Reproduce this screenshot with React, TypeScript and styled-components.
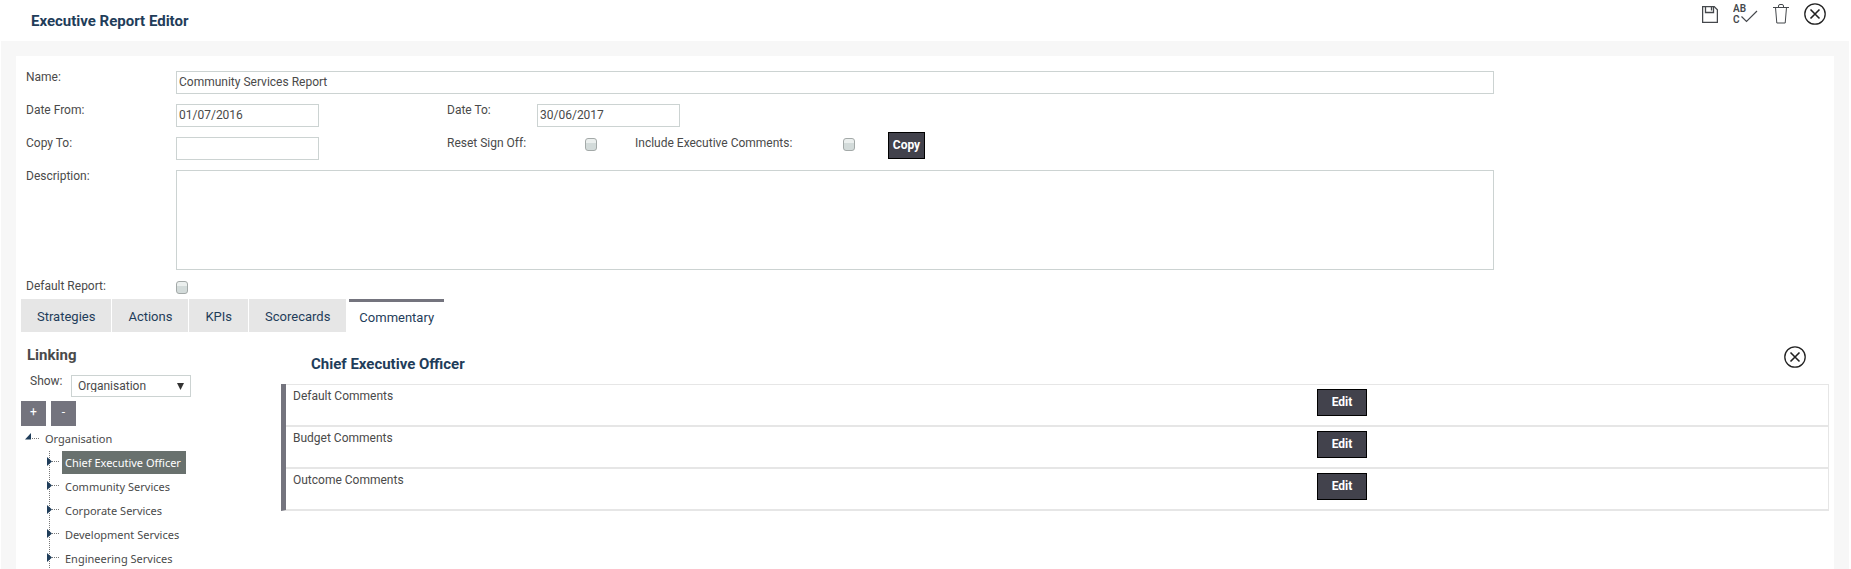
import React, { useState } from 'react';
import styled, { createGlobalStyle } from 'styled-components';

const color = {
  text: '#4a4a4a',
  heading: '#1f3d5a',
  canvas: '#f7f7f7',
  line: '#e6e6e6',
  field: '#ccd3d2',
  slate: '#74747e',
  dark: '#42424c',
  selected: '#69716e',
};

const GlobalStyle = createGlobalStyle`
  *, *::before, *::after { box-sizing: border-box; }
  body {
    margin: 0;
    background: #fff;
    color: ${color.text};
    font: 12px/12px Roboto, "Liberation Sans", sans-serif;
  }
  h1, h2, ul { margin: 0; padding: 0; }
  ul { list-style: none; }
  button, input, select, textarea { font: inherit; color: inherit; margin: 0; }
  button { cursor: pointer; }
`;

const Page = styled.div`
  height: 100vh;
  display: flex;
  flex-direction: column;
  overflow: hidden;
`;

const Header = styled.header`
  flex: none;
  height: 41px;
  display: flex;
  justify-content: space-between;
  align-items: flex-start;
  padding: 2px 25px 0 31px;
`;

const Title = styled.h1`
  color: ${color.heading};
  font-size: 15px;
  line-height: 38px;
  font-weight: 700;
`;

const Toolbar = styled.div`
  display: flex;
  align-items: center;
  gap: 15px;
`;

const IconButton = styled.button`
  display: flex;
  padding: 0;
  border: 0;
  background: none;
  color: #45484c;
`;

const Canvas = styled.main`
  flex: 1;
  min-height: 0;
  margin: 0 2px 0 1px;
  padding: 15px 15px 0;
  background: ${color.canvas};
`;

const Panel = styled.div`
  min-height: 100%;
  background: #fff;
`;

const Form = styled.form`
  display: flex;
  flex-direction: column;
  gap: 10px;
  padding: 15px 340px 5px 10px;
`;

const Row = styled.div`
  display: flex;
  align-items: flex-start;
`;

const Label = styled.label<{ $width: number }>`
  flex: none;
  width: ${(p) => p.$width}px;
`;

const TextInput = styled.input<{ $short?: boolean }>`
  ${(p) => (p.$short ? 'width: 143px;' : 'flex: 1; min-width: 0;')}
  height: 23px;
  padding: 0 2px 2px;
  border: 1px solid ${color.field};
  background: #fff;
`;

const TextArea = styled.textarea`
  flex: 1;
  min-width: 0;
  height: 100px;
  padding: 2px;
  border: 1px solid ${color.field};
  resize: none;
`;

const Slot = styled.div<{ $width: number }>`
  flex: none;
  display: flex;
  width: ${(p) => p.$width}px;
`;

const Check = styled.input.attrs({ type: 'checkbox' })`
  appearance: none;
  width: 12px;
  height: 13px;
  margin-top: 1px;
  border: 1px solid #a3a9a8;
  border-radius: 3px;
  background: linear-gradient(#ebefee 35%, #d3dbda 40%);
  &:checked { background: ${color.slate}; }
`;

const DarkButton = styled.button<{ $wide?: boolean }>`
  height: 27px;
  width: ${(p) => (p.$wide ? 50 : 37)}px;
  padding: 0 0 2px;
  border: 1px solid #000;
  background: ${color.dark};
  color: #fff;
  font-weight: 700;
`;

const CopyButton = styled(DarkButton)`
  margin: -5px 0;
`;

const Tabs = styled.div`
  display: flex;
  gap: 1px;
  padding: 0 5px;
`;

const Tab = styled.button<{ $active: boolean }>`
  height: 33px;
  border: 0;
  border-top: 3px solid ${(p) => (p.$active ? color.slate : color.line)};
  margin-left: ${(p) => (p.$active ? 2 : 0)}px;
  padding: ${(p) => (p.$active ? '2px 10px 0' : '0 16px')};
  background: ${(p) => (p.$active ? '#fff' : color.line)};
  color: ${color.heading};
  font-size: 13px;
`;

const Split = styled.div`
  display: grid;
  grid-template-columns: 260px 1fr;
  padding: 0 5px;
`;

const SideTitle = styled.h2`
  padding: 15px 6px 11px;
  font-size: 15px;
  line-height: 17px;
  font-weight: 700;
`;

const ShowRow = styled.div`
  display: flex;
  padding-left: 9px;
`;

const SelectBox = styled.div`
  display: flex;
  align-items: center;
  width: 120px;
  height: 22px;
  border: 1px solid ${color.field};
`;

const Select = styled.select`
  flex: 1;
  height: 20px;
  padding: 0 6px;
  border: 0;
  background: none;
  appearance: none;
`;

const Arrow = styled.svg`
  margin: 0 6px 0 -12px;
  pointer-events: none;
`;

const ToggleRow = styled.div`
  display: flex;
  gap: 5px;
  padding: 4px 0 1px;
`;

const Toggle = styled.button`
  width: 25px;
  height: 25px;
  padding: 0 0 3px;
  border: 0;
  background: ${color.slate};
  color: #fff;
`;

const Tree = styled.ul`
  font-family: "Noto Sans", "Open Sans", sans-serif;
  font-size: 11px;
`;

const Branch = styled.ul`
  padding-left: 24px;
`;

const TreeItem = styled.li`
  background: linear-gradient(#777 50%, transparent 50%) 4px 0 / 1px 2px repeat-y;
`;

const TreeLine = styled.div`
  display: flex;
  height: 24px;
`;

const Twig = styled.svg`
  flex: none;
  margin-top: 3px;
`;

const TreeLabel = styled.button<{ $selected: boolean }>`
  height: 23px;
  padding: 0 5px 0 3px;
  border: 0;
  white-space: nowrap;
  background: ${(p) => (p.$selected ? color.selected : 'none')};
  color: ${(p) => (p.$selected ? '#fff' : color.text)};
`;

const DetailHead = styled.div`
  display: flex;
  justify-content: space-between;
  align-items: flex-start;
  height: 52px;
  padding: 14px 23px 0 30px;
`;

const DetailTitle = styled.h2`
  color: ${color.heading};
  font-size: 15px;
  line-height: 36px;
  font-weight: 700;
`;

const Comments = styled.ul`
  border-left: 5px solid ${color.slate};
  border-bottom: 1px solid ${color.line};
`;

const Comment = styled.li`
  display: grid;
  grid-template-columns: 2fr 1fr;
  align-items: flex-start;
  height: 42px;
  padding: 4px 0;
  border: 1px solid ${color.line};
  border-left: 0;
`;

const CommentName = styled.span`
  padding: 1px 7px;
`;

const EditCell = styled.div`
  padding-left: 3px;
`;

const SaveIcon = () => (
  <svg width="16" height="17" viewBox="0 0 16 17" fill="none" stroke="currentColor" strokeWidth="1.300">
    <path d="M.6.6h11.600l3.200 3.200v12.600H.6z" />
    <path d="M3.500.5v6h8v-6M9.500 1v3.500" />
  </svg>
);

const SpellIcon = () => (
  <svg width="25" height="24" viewBox="0 0 25 24">
    <g fill="currentColor" fontFamily="Roboto, sans-serif" fontSize="10" fontWeight="600">
      <text x="0" y="10">AB</text>
      <text x="0" y="21">C</text>
    </g>
    <path d="M8.500 14.500l5 5L24 9" fill="none" stroke="currentColor" strokeWidth="1.200" />
  </svg>
);

const TrashIcon = () => (
  <svg width="16" height="20" viewBox="0 0 16 20" fill="none" stroke="currentColor">
    <path d="M0 3.500h16M5.500 3.500V2q0-1.500 1.500-1.500h2q1.500 0 1.500 1.500v1.500" />
    <path d="M2.500 3.500l1.300 15.500h8.400l1.300-15.500" />
  </svg>
);

const CloseIcon = () => (
  <svg width="22" height="22" viewBox="0 0 22 22" fill="none" stroke="#222" strokeWidth="1.300">
    <circle cx="11" cy="11" r="10.200" />
    <path d="M6.500 6.500l9 9M15.500 6.500l-9 9" strokeWidth="1.600" />
  </svg>
);

const OpenTwig = () => (
  <Twig width="21" height="16" viewBox="0 0 21 16">
    <path d="M10 3v6.500H4z" fill={color.heading} />
    <path d="M11 8.500h8" stroke="#777" strokeDasharray="1 1" />
  </Twig>
);

const ClosedTwig = () => (
  <Twig width="17" height="16" viewBox="0 0 17 16">
    <path d="M2 3l5 4.500-5 4.500z" fill={color.heading} />
    <path d="M7 7.500h8" stroke="#777" strokeDasharray="1 1" />
  </Twig>
);

const tabNames = ['Strategies', 'Actions', 'KPIs', 'Scorecards', 'Commentary'];
const units = [
  'Chief Executive Officer',
  'Community Services',
  'Corporate Services',
  'Development Services',
  'Engineering Services',
];
const commentTypes = ['Default Comments', 'Budget Comments', 'Outcome Comments'];

export default function App() {
  const [tab, setTab] = useState('Commentary');
  const [unit, setUnit] = useState(units[0]);
  const [expanded, setExpanded] = useState(true);

  return (
    <Page>
      <GlobalStyle />
      <Header>
        <Title>Executive Report Editor</Title>
        <Toolbar>
          <IconButton aria-label="Save"><SaveIcon /></IconButton>
          <IconButton aria-label="Check spelling"><SpellIcon /></IconButton>
          <IconButton aria-label="Delete"><TrashIcon /></IconButton>
          <IconButton aria-label="Close"><CloseIcon /></IconButton>
        </Toolbar>
      </Header>
      <Canvas>
        <Panel>
          <Form onSubmit={(e) => e.preventDefault()}>
            <Row>
              <Label $width={150} htmlFor="name">Name:</Label>
              <TextInput id="name" defaultValue="Community Services Report" />
            </Row>
            <Row>
              <Label $width={150} htmlFor="from">Date From:</Label>
              <Slot $width={271}><TextInput $short id="from" defaultValue="01/07/2016" /></Slot>
              <Label $width={90} htmlFor="to">Date To:</Label>
              <TextInput $short id="to" defaultValue="30/06/2017" />
            </Row>
            <Row>
              <Label $width={150} htmlFor="copy">Copy To:</Label>
              <Slot $width={271}><TextInput $short id="copy" /></Slot>
              <Label $width={138} htmlFor="reset">Reset Sign Off:</Label>
              <Slot $width={50}><Check id="reset" /></Slot>
              <Label $width={208} htmlFor="include">Include Executive Comments:</Label>
              <Slot $width={45}><Check id="include" /></Slot>
              <CopyButton type="button">Copy</CopyButton>
            </Row>
            <Row>
              <Label $width={150} htmlFor="description">Description:</Label>
              <TextArea id="description" />
            </Row>
            <Row>
              <Label $width={150} htmlFor="default">Default Report:</Label>
              <Check id="default" />
            </Row>
          </Form>
          <Tabs role="tablist">
            {tabNames.map((t) => (
              <Tab key={t} role="tab" aria-selected={t === tab} $active={t === tab} onClick={() => setTab(t)}>
                {t}
              </Tab>
            ))}
          </Tabs>
          <Split>
            <aside>
              <SideTitle>Linking</SideTitle>
              <ShowRow>
                <Label $width={41} htmlFor="show">Show:</Label>
                <SelectBox>
                  <Select id="show"><option>Organisation</option></Select>
                  <Arrow width="7" height="7" viewBox="0 0 7 7"><path d="M0 0h7L3.500 7z" fill="#333" /></Arrow>
                </SelectBox>
              </ShowRow>
              <ToggleRow>
                <Toggle aria-label="Expand all" onClick={() => setExpanded(true)}>+</Toggle>
                <Toggle aria-label="Collapse all" onClick={() => setExpanded(false)}>-</Toggle>
              </ToggleRow>
              <Tree>
                <li>
                  <TreeLine>
                    <OpenTwig />
                    <TreeLabel $selected={false}>Organisation</TreeLabel>
                  </TreeLine>
                  {expanded && (
                    <Branch>
                      {units.map((u) => (
                        <TreeItem key={u}>
                          <TreeLine>
                            <ClosedTwig />
                            <TreeLabel $selected={u === unit} onClick={() => setUnit(u)}>{u}</TreeLabel>
                          </TreeLine>
                        </TreeItem>
                      ))}
                    </Branch>
                  )}
                </li>
              </Tree>
            </aside>
            <section>
              <DetailHead>
                <DetailTitle>{unit}</DetailTitle>
                <IconButton aria-label="Close comments"><CloseIcon /></IconButton>
              </DetailHead>
              <Comments>
                {commentTypes.map((c) => (
                  <Comment key={c}>
                    <CommentName>{c}</CommentName>
                    <EditCell><DarkButton $wide>Edit</DarkButton></EditCell>
                  </Comment>
                ))}
              </Comments>
            </section>
          </Split>
        </Panel>
      </Canvas>
    </Page>
  );
}
